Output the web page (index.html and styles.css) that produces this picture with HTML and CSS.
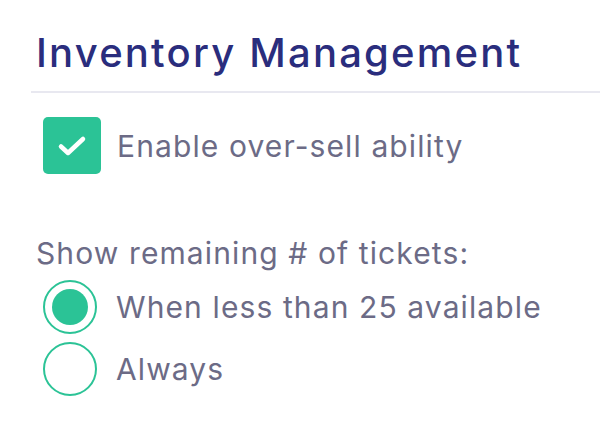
FILE: index.html
```html
<!DOCTYPE html>
<html lang="en">
<head>
    <meta charset="UTF-8">
    <title>Inventory Management</title>
    <link rel="stylesheet" href="styles.css">
</head>
<body>
    <div class="panel">
        <h1>Inventory Management</h1>
        <div class="section">
            <label class="check-row">
                <span class="checkbox">
                    <svg width="30" height="22" viewBox="0 0 30 22"><path d="M4 11.5 L11 18 L26 4" fill="none" stroke="#fff" stroke-width="4.5" stroke-linecap="round" stroke-linejoin="round"/></svg>
                </span>
                <span class="label">Enable over-sell ability</span>
            </label>

            <div class="group">
                <div class="group-title">Show remaining # of tickets:</div>
                <label class="radio-row">
                    <span class="radio checked"></span>
                    <span class="label">When less than 25 available</span>
                </label>
                <label class="radio-row">
                    <span class="radio"></span>
                    <span class="label">Always</span>
                </label>
            </div>
        </div>
    </div>
</body>
</html>
```

FILE: styles.css
```css
body {
    margin: 0;
    font-family: "Inter", "Noto Sans", sans-serif;
    background-color: #fff;
    color: #6c6b86;
}
.panel {
    padding: 28px 0 0 31px;
}
h1 {
    margin: 0;
    padding: 0 0 14px 5px;
    font-size: 40px;
    font-weight: 500;
    letter-spacing: 0.055em;
    color: #2a2d7d;
    border-bottom: 2px solid #e8e8f0;
}
.section {
    padding: 24px 0 0 12px;
}
.check-row {
    display: flex;
    align-items: center;
    gap: 16px;
}
.checkbox {
    width: 58px;
    height: 57px;
    border-radius: 5px;
    background-color: #2bc396;
    display: flex;
    align-items: center;
    justify-content: center;
}
.label {
    font-size: 30px;
    letter-spacing: 0.037em;
}
.group {
    margin-top: 61px;
}
.group-title {
    font-size: 30px;
    letter-spacing: 0.037em;
    margin-left: -7px;
    margin-bottom: 9px;
}
.radio-row {
    display: flex;
    align-items: center;
    gap: 19px;
    margin-bottom: 8px;
}
.radio {
    width: 50px;
    height: 50px;
    border: 2px solid #2bc396;
    border-radius: 50%;
    display: flex;
    align-items: center;
    justify-content: center;
}
.radio.checked::after {
    content: "";
    width: 36px;
    height: 36px;
    border-radius: 50%;
    background-color: #2bc396;
}
```
